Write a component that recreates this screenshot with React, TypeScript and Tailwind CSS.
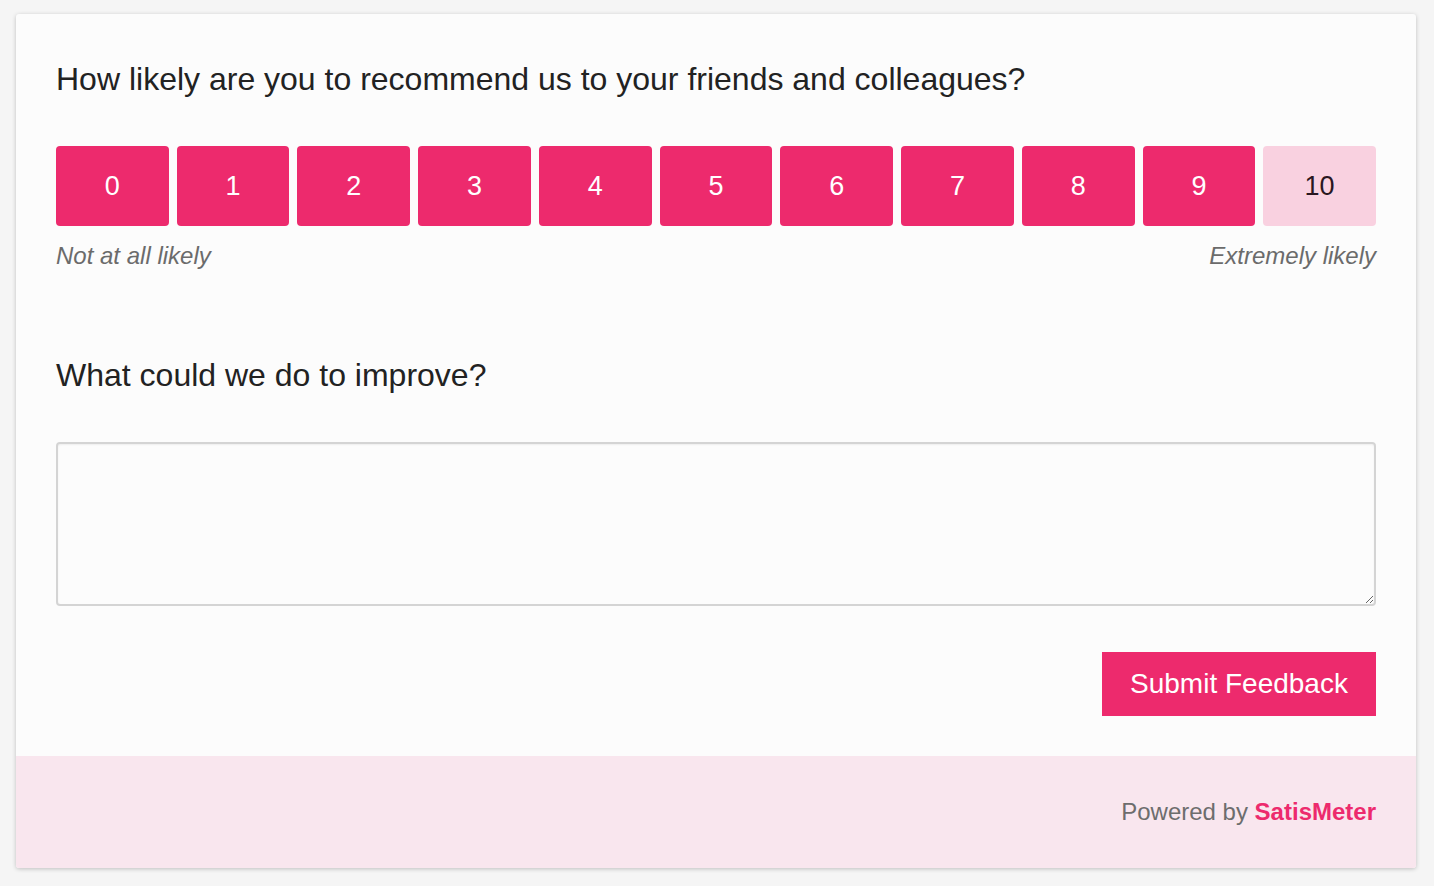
const SCORES = [0, 1, 2, 3, 4, 5, 6, 7, 8, 9, 10];

export default function App() {
  return (
    <div
      className="min-h-[886px] bg-[#f5f5f5] px-4 pt-[14px]"
      style={{ fontFamily: '"Liberation Sans", Arial, sans-serif' }}
    >
      <div className="w-[1400px] overflow-hidden rounded-[3px] bg-[#fcfcfc] shadow-[0_1px_4px_rgba(0,0,0,0.22)]">
        <div className="px-10 pt-[46px] pb-10">
          <h2 className="text-[32px] leading-[38px] text-[#222]">
            How likely are you to recommend us to your friends and colleagues?
          </h2>

          <div className="mt-12 grid grid-cols-11 gap-2">
            {SCORES.map((n) => (
              <button
                key={n}
                className={
                  n === 10
                    ? "h-20 rounded-[4px] bg-[#f9d1e0] text-[27px] text-[#2a1620]"
                    : "h-20 rounded-[4px] bg-[#ed2a6d] text-[27px] text-white"
                }
              >
                {n}
              </button>
            ))}
          </div>
          <div className="mt-4 flex justify-between text-[24px] leading-[28px] italic text-[#6b6b6b]">
            <span>Not at all likely</span>
            <span>Extremely likely</span>
          </div>

          <h2 className="mt-[86px] text-[32px] leading-[38px] text-[#222]">
            What could we do to improve?
          </h2>

          <textarea className="mt-12 block h-[164px] w-full resize-y rounded-[4px] border-2 border-[#d4d4d4] bg-[#fcfcfc] p-3 text-[20px] shadow-[inset_0_1px_2px_rgba(0,0,0,0.06)] outline-none" />

          <div className="mt-[46px] flex justify-end">
            <button className="h-16 w-[274px] bg-[#ed2a6d] text-[28px] text-white">
              Submit Feedback
            </button>
          </div>
        </div>

        <div className="flex h-[112px] items-center justify-end bg-[#f9e6ee] px-10 text-[24px] text-[#6d6d6d]">
          <span>
            Powered by{" "}
            <span className="font-bold text-[#ed2a6d]">SatisMeter</span>
          </span>
        </div>
      </div>
    </div>
  );
}
